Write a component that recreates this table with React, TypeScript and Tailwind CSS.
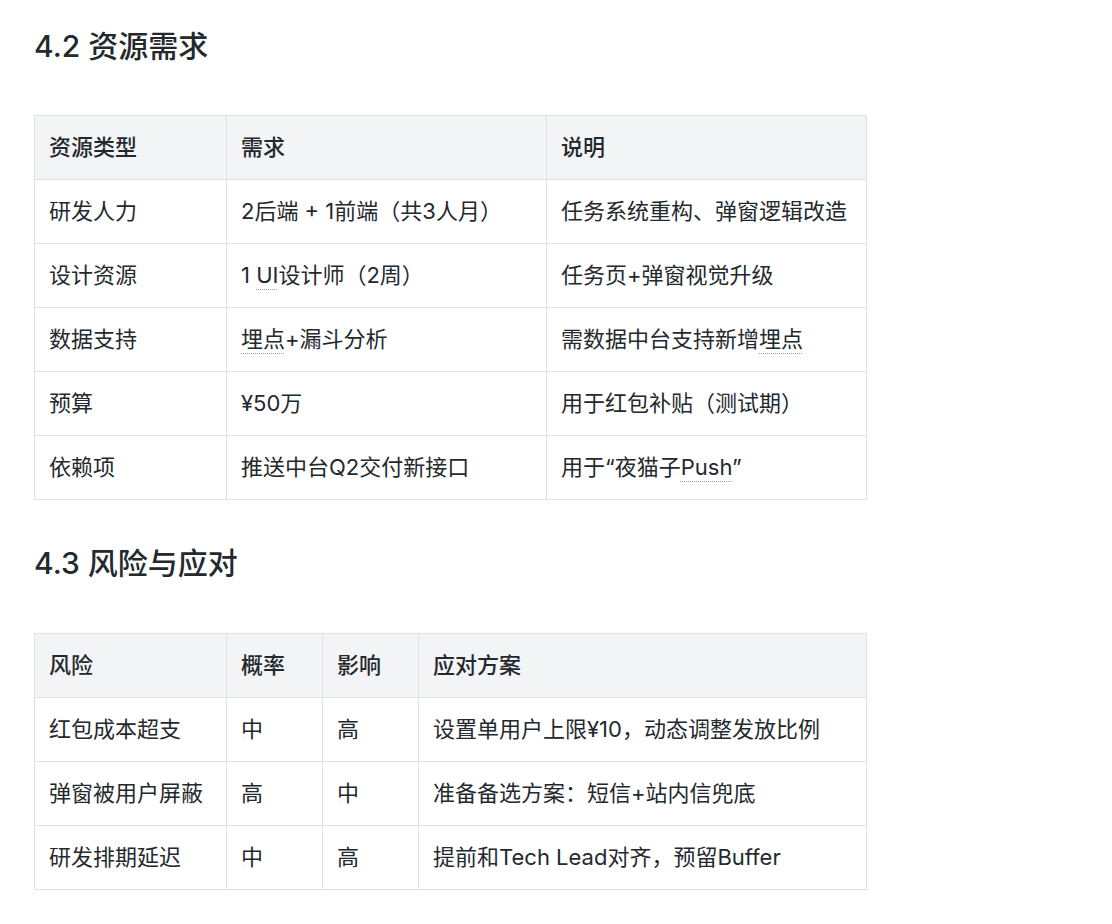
import type { ReactNode } from 'react';

type Column = { title: string; width: string };

const dotted =
  'underline decoration-dotted decoration-[#9aa0a6] decoration-1 underline-offset-[6px]';

function Mark({ children }: { children: ReactNode }) {
  return <span className={dotted}>{children}</span>;
}

const resourceColumns: Column[] = [
  { title: '资源类型', width: 'w-[192px]' },
  { title: '需求', width: 'w-[320px]' },
  { title: '说明', width: 'w-[320px]' },
];

const resourceRows: ReactNode[][] = [
  ['研发人力', '2后端 + 1前端（共3人月）', '任务系统重构、弹窗逻辑改造'],
  [
    '设计资源',
    <>
      1 <Mark>UI</Mark>设计师（2周）
    </>,
    '任务页+弹窗视觉升级',
  ],
  [
    '数据支持',
    <>
      <Mark>埋点</Mark>+漏斗分析
    </>,
    <>
      需数据中台支持新增<Mark>埋点</Mark>
    </>,
  ],
  ['预算', '¥50万', '用于红包补贴（测试期）'],
  [
    '依赖项',
    '推送中台Q2交付新接口',
    <>
      用于“夜猫子<Mark>Push</Mark>”
    </>,
  ],
];

const riskColumns: Column[] = [
  { title: '风险', width: 'w-[192px]' },
  { title: '概率', width: 'w-[96px]' },
  { title: '影响', width: 'w-[96px]' },
  { title: '应对方案', width: 'w-[448px]' },
];

const riskRows: ReactNode[][] = [
  ['红包成本超支', '中', '高', '设置单用户上限¥10，动态调整发放比例'],
  ['弹窗被用户屏蔽', '高', '中', '准备备选方案：短信+站内信兜底'],
  ['研发排期延迟', '中', '高', '提前和Tech Lead对齐，预留Buffer'],
];

function DataTable({ columns, rows }: { columns: Column[]; rows: ReactNode[][] }) {
  return (
    <table className="w-[832px] table-fixed border-collapse text-[22px] leading-[33px]">
      <thead>
        <tr className="bg-[#f3f4f6]">
          {columns.map((col) => (
            <th
              key={col.title}
              className={`${col.width} border border-[#dfe2e5] px-[14px] py-[15px] text-left font-medium`}
            >
              {col.title}
            </th>
          ))}
        </tr>
      </thead>
      <tbody>
        {rows.map((row, i) => (
          <tr key={i} className="bg-white">
            {row.map((cell, j) => (
              <td
                key={j}
                className="whitespace-nowrap border border-[#dfe2e5] px-[14px] py-[15px]"
              >
                {cell}
              </td>
            ))}
          </tr>
        ))}
      </tbody>
    </table>
  );
}

export default function App() {
  return (
    <div
      className="min-h-screen bg-white px-[34px] pt-[27px] text-[#24292e]"
      style={{ fontFamily: 'Inter, "Noto Sans CJK SC", sans-serif' }}
    >
      <h2 className="mb-[50px] text-[30px] font-medium leading-[38px]">4.2 资源需求</h2>
      <DataTable columns={resourceColumns} rows={resourceRows} />

      <h2 className="mb-[51px] mt-[44px] text-[30px] font-medium leading-[38px]">
        4.3 风险与应对
      </h2>
      <DataTable columns={riskColumns} rows={riskRows} />
    </div>
  );
}
